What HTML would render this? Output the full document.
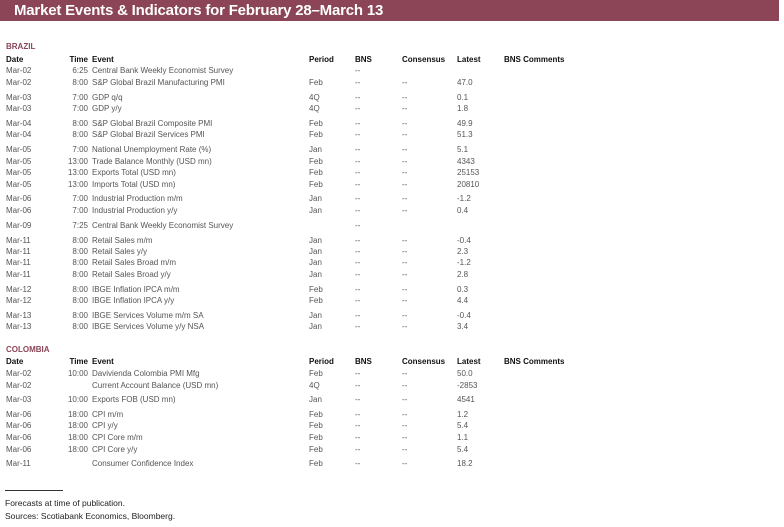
<!DOCTYPE html>
<html><head><meta charset="utf-8"><style>
body{margin:0;width:784px;height:527px;background:#fff;font-family:"Liberation Sans",sans-serif;position:relative;overflow:hidden}
.bar{position:absolute;left:0;top:0;width:779px;height:21px;background:#8b4557}
.bar span{position:absolute;left:14px;top:2px;color:#fff;font-weight:bold;font-size:15px;letter-spacing:-0.2px}
.r{position:absolute;left:0;width:784px;height:11px;font-size:8px;color:#555;line-height:11px;white-space:nowrap}
.r span{position:absolute;top:0}
.d{left:6px}.t{right:696px;text-align:right}.e{left:92px}.p{left:309px}.b{left:355px}.c{left:402px}.l{left:457px}.m{left:504px}
.h{color:#111;font-weight:bold}
.sec{position:absolute;left:6px;font-size:8px;font-weight:bold;color:#8b4557}
.line{position:absolute;left:5px;top:490px;width:58px;height:1px;background:#333}
.f{position:absolute;left:5px;font-size:8.5px;color:#222}
</style></head><body>
<div class="bar"><span>Market Events &amp; Indicators for February 28–March 13</span></div>
<div class="sec" style="top:42px">BRAZIL</div>
<div class="r h" style="top:54px"><span class="d">Date</span><span class="t">Time</span><span class="e">Event</span><span class="p">Period</span><span class="b">BNS</span><span class="c">Consensus</span><span class="l">Latest</span><span class="m">BNS Comments</span></div>
<div class="r" style="top:65px"><span class="d">Mar-02</span><span class="t">6:25</span><span class="e">Central Bank Weekly Economist Survey</span><span class="b">--</span></div>
<div class="r" style="top:77px"><span class="d">Mar-02</span><span class="t">8:00</span><span class="e">S&amp;P Global Brazil Manufacturing PMI</span><span class="p">Feb</span><span class="b">--</span><span class="c">--</span><span class="l">47.0</span></div>
<div class="r" style="top:92px"><span class="d">Mar-03</span><span class="t">7:00</span><span class="e">GDP q/q</span><span class="p">4Q</span><span class="b">--</span><span class="c">--</span><span class="l">0.1</span></div>
<div class="r" style="top:103px"><span class="d">Mar-03</span><span class="t">7:00</span><span class="e">GDP y/y</span><span class="p">4Q</span><span class="b">--</span><span class="c">--</span><span class="l">1.8</span></div>
<div class="r" style="top:118px"><span class="d">Mar-04</span><span class="t">8:00</span><span class="e">S&amp;P Global Brazil Composite PMI</span><span class="p">Feb</span><span class="b">--</span><span class="c">--</span><span class="l">49.9</span></div>
<div class="r" style="top:129px"><span class="d">Mar-04</span><span class="t">8:00</span><span class="e">S&amp;P Global Brazil Services PMI</span><span class="p">Feb</span><span class="b">--</span><span class="c">--</span><span class="l">51.3</span></div>
<div class="r" style="top:144px"><span class="d">Mar-05</span><span class="t">7:00</span><span class="e">National Unemployment Rate (%)</span><span class="p">Jan</span><span class="b">--</span><span class="c">--</span><span class="l">5.1</span></div>
<div class="r" style="top:156px"><span class="d">Mar-05</span><span class="t">13:00</span><span class="e">Trade Balance Monthly (USD mn)</span><span class="p">Feb</span><span class="b">--</span><span class="c">--</span><span class="l">4343</span></div>
<div class="r" style="top:167px"><span class="d">Mar-05</span><span class="t">13:00</span><span class="e">Exports Total (USD mn)</span><span class="p">Feb</span><span class="b">--</span><span class="c">--</span><span class="l">25153</span></div>
<div class="r" style="top:179px"><span class="d">Mar-05</span><span class="t">13:00</span><span class="e">Imports Total (USD mn)</span><span class="p">Feb</span><span class="b">--</span><span class="c">--</span><span class="l">20810</span></div>
<div class="r" style="top:193px"><span class="d">Mar-06</span><span class="t">7:00</span><span class="e">Industrial Production m/m</span><span class="p">Jan</span><span class="b">--</span><span class="c">--</span><span class="l">-1.2</span></div>
<div class="r" style="top:205px"><span class="d">Mar-06</span><span class="t">7:00</span><span class="e">Industrial Production y/y</span><span class="p">Jan</span><span class="b">--</span><span class="c">--</span><span class="l">0.4</span></div>
<div class="r" style="top:220px"><span class="d">Mar-09</span><span class="t">7:25</span><span class="e">Central Bank Weekly Economist Survey</span><span class="b">--</span></div>
<div class="r" style="top:235px"><span class="d">Mar-11</span><span class="t">8:00</span><span class="e">Retail Sales m/m</span><span class="p">Jan</span><span class="b">--</span><span class="c">--</span><span class="l">-0.4</span></div>
<div class="r" style="top:246px"><span class="d">Mar-11</span><span class="t">8:00</span><span class="e">Retail Sales y/y</span><span class="p">Jan</span><span class="b">--</span><span class="c">--</span><span class="l">2.3</span></div>
<div class="r" style="top:257px"><span class="d">Mar-11</span><span class="t">8:00</span><span class="e">Retail Sales Broad m/m</span><span class="p">Jan</span><span class="b">--</span><span class="c">--</span><span class="l">-1.2</span></div>
<div class="r" style="top:269px"><span class="d">Mar-11</span><span class="t">8:00</span><span class="e">Retail Sales Broad y/y</span><span class="p">Jan</span><span class="b">--</span><span class="c">--</span><span class="l">2.8</span></div>
<div class="r" style="top:284px"><span class="d">Mar-12</span><span class="t">8:00</span><span class="e">IBGE Inflation IPCA m/m</span><span class="p">Feb</span><span class="b">--</span><span class="c">--</span><span class="l">0.3</span></div>
<div class="r" style="top:295px"><span class="d">Mar-12</span><span class="t">8:00</span><span class="e">IBGE Inflation IPCA y/y</span><span class="p">Feb</span><span class="b">--</span><span class="c">--</span><span class="l">4.4</span></div>
<div class="r" style="top:310px"><span class="d">Mar-13</span><span class="t">8:00</span><span class="e">IBGE Services Volume m/m SA</span><span class="p">Jan</span><span class="b">--</span><span class="c">--</span><span class="l">-0.4</span></div>
<div class="r" style="top:321px"><span class="d">Mar-13</span><span class="t">8:00</span><span class="e">IBGE Services Volume y/y NSA</span><span class="p">Jan</span><span class="b">--</span><span class="c">--</span><span class="l">3.4</span></div>
<div class="sec" style="top:345px">COLOMBIA</div>
<div class="r h" style="top:356px"><span class="d">Date</span><span class="t">Time</span><span class="e">Event</span><span class="p">Period</span><span class="b">BNS</span><span class="c">Consensus</span><span class="l">Latest</span><span class="m">BNS Comments</span></div>
<div class="r" style="top:368px"><span class="d">Mar-02</span><span class="t">10:00</span><span class="e">Davivienda Colombia PMI Mfg</span><span class="p">Feb</span><span class="b">--</span><span class="c">--</span><span class="l">50.0</span></div>
<div class="r" style="top:380px"><span class="d">Mar-02</span><span class="e">Current Account Balance (USD mn)</span><span class="p">4Q</span><span class="b">--</span><span class="c">--</span><span class="l">-2853</span></div>
<div class="r" style="top:394px"><span class="d">Mar-03</span><span class="t">10:00</span><span class="e">Exports FOB (USD mn)</span><span class="p">Jan</span><span class="b">--</span><span class="c">--</span><span class="l">4541</span></div>
<div class="r" style="top:409px"><span class="d">Mar-06</span><span class="t">18:00</span><span class="e">CPI m/m</span><span class="p">Feb</span><span class="b">--</span><span class="c">--</span><span class="l">1.2</span></div>
<div class="r" style="top:420px"><span class="d">Mar-06</span><span class="t">18:00</span><span class="e">CPI y/y</span><span class="p">Feb</span><span class="b">--</span><span class="c">--</span><span class="l">5.4</span></div>
<div class="r" style="top:432px"><span class="d">Mar-06</span><span class="t">18:00</span><span class="e">CPI Core m/m</span><span class="p">Feb</span><span class="b">--</span><span class="c">--</span><span class="l">1.1</span></div>
<div class="r" style="top:444px"><span class="d">Mar-06</span><span class="t">18:00</span><span class="e">CPI Core y/y</span><span class="p">Feb</span><span class="b">--</span><span class="c">--</span><span class="l">5.4</span></div>
<div class="r" style="top:458px"><span class="d">Mar-11</span><span class="e">Consumer Confidence Index</span><span class="p">Feb</span><span class="b">--</span><span class="c">--</span><span class="l">18.2</span></div>
<div class="line"></div>
<div class="f" style="top:498px">Forecasts at time of publication.</div>
<div class="f" style="top:511px">Sources: Scotiabank Economics, Bloomberg.</div>
</body></html>
